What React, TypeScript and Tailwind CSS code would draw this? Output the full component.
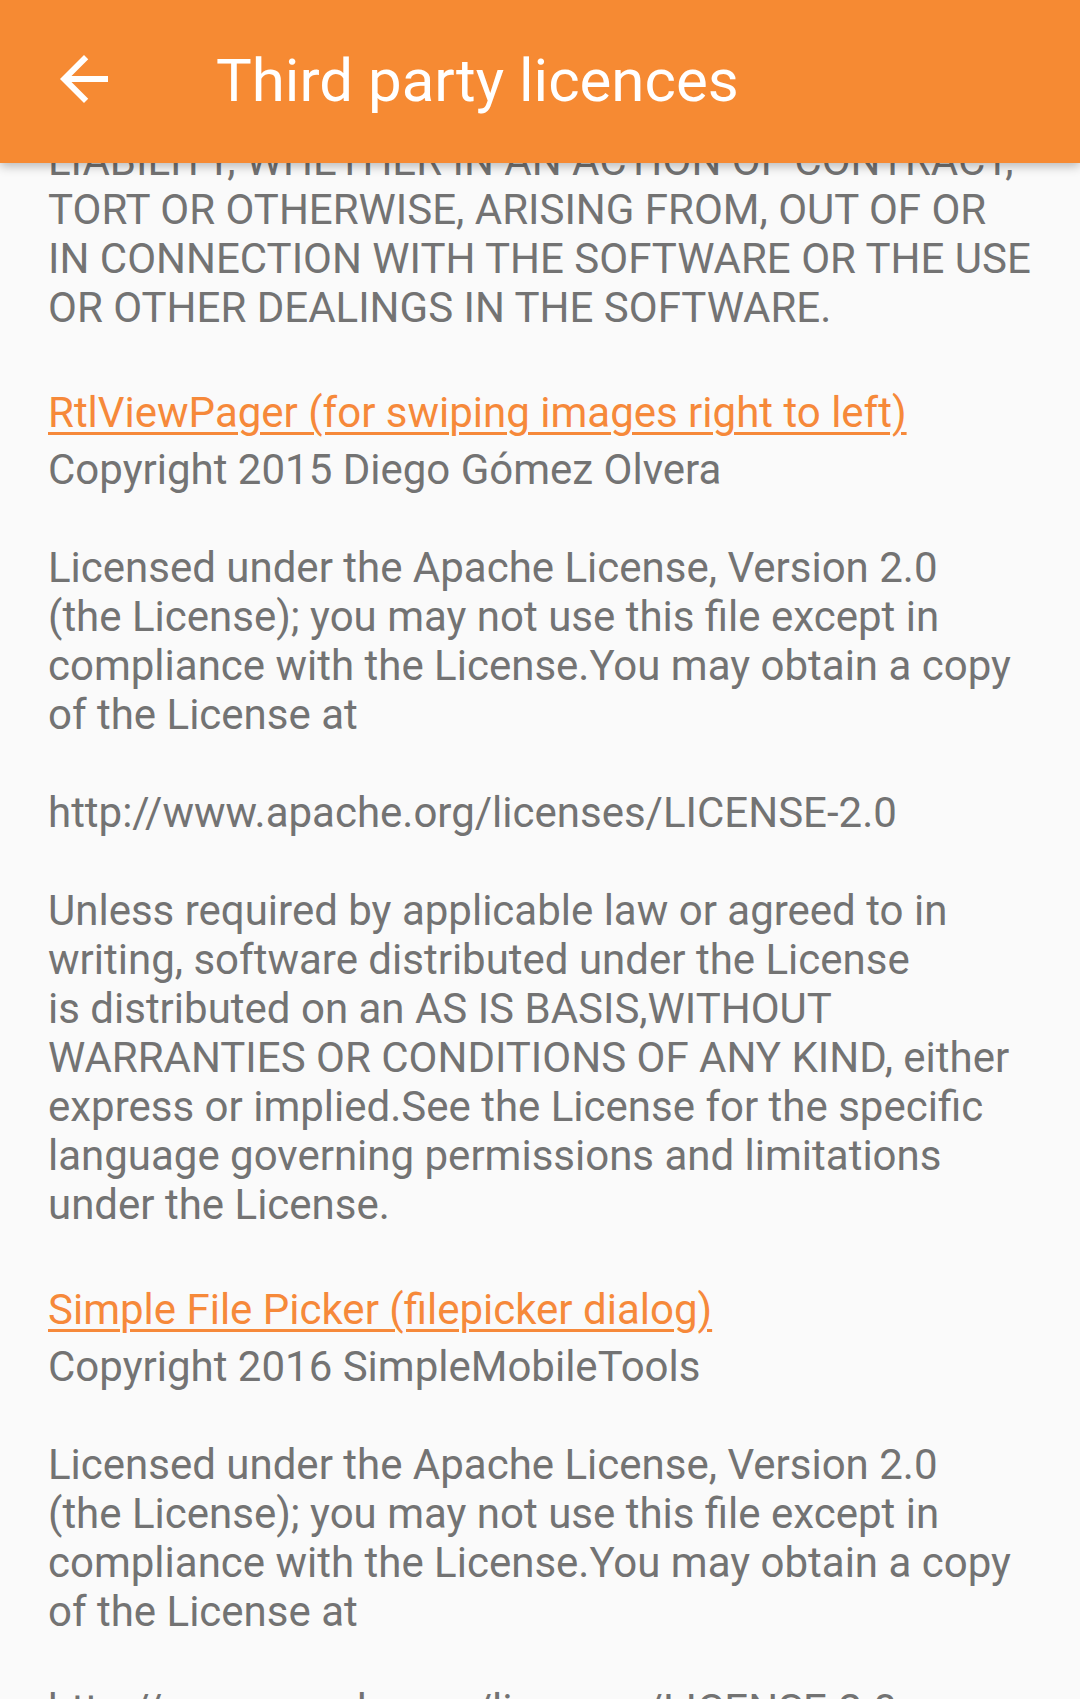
import React from "react";

const MIT_TAIL = [
  "LIABILITY, WHETHER IN AN ACTION OF CONTRACT,",
  "TORT OR OTHERWISE, ARISING FROM, OUT OF OR",
  "IN CONNECTION WITH THE SOFTWARE OR THE USE",
  "OR OTHER DEALINGS IN THE SOFTWARE.",
];

const apache = (copyright: string) => [
  copyright,
  "",
  "Licensed under the Apache License, Version 2.0",
  "(the License); you may not use this file except in",
  "compliance with the License.You may obtain a copy",
  "of the License at",
  "",
  "http://www.apache.org/licenses/LICENSE-2.0",
  "",
  "Unless required by applicable law or agreed to in",
  "writing, software distributed under the License",
  "is distributed on an AS IS BASIS,WITHOUT",
  "WARRANTIES OR CONDITIONS OF ANY KIND, either",
  "express or implied.See the License for the specific",
  "language governing permissions and limitations",
  "under the License.",
];

function TextBlock({ lines }: { lines: string[] }) {
  return (
    <div className="text-[42px] leading-[49px] text-[#737373] whitespace-nowrap">
      {lines.map((l, i) => (
        <div key={i} className="h-[49px]">
          {l}
        </div>
      ))}
    </div>
  );
}

function Item({ title, lines }: { title: string; lines: string[] }) {
  return (
    <div className="flex flex-col mt-[56px]">
      <a
        href="#"
        className="self-start text-[42px] leading-[49px] text-[#f6893a] underline decoration-[3px] underline-offset-[5px] whitespace-nowrap"
      >
        {title}
      </a>
      <div className="mt-[8px]">
        <TextBlock lines={lines} />
      </div>
    </div>
  );
}

export default function App() {
  return (
    <div
      className="relative w-[1080px] h-[1699px] overflow-hidden bg-[#fafafa]"
      style={{ fontFamily: "Roboto, 'Noto Sans', sans-serif" }}
    >
      <div className="flex flex-col pl-[48px] pr-[48px] pt-[136px]">
        <TextBlock lines={MIT_TAIL} />
        <Item
          title="RtlViewPager (for swiping images right to left)"
          lines={apache("Copyright 2015 Diego Gómez Olvera")}
        />
        <Item
          title="Simple File Picker (filepicker dialog)"
          lines={apache("Copyright 2016 SimpleMobileTools")}
        />
      </div>

      <div className="absolute top-0 left-0 right-0 h-[163px] bg-[#f68a33] flex items-start shadow-[0_3px_10px_rgba(0,0,0,0.28)]">
        <div className="ml-[48px] mt-[43px] w-[72px] h-[72px] flex items-center justify-center">
          <svg width="72" height="72" viewBox="0 0 24 24" fill="#ffffff">
            <path d="M20 11H7.83l5.59-5.59L12 4l-8 8 8 8 1.41-1.41L7.83 13H20v-2z" />
          </svg>
        </div>
        <div className="ml-[96px] mt-[46px] text-[60px] leading-[70px] text-white whitespace-nowrap">
          Third party licences
        </div>
      </div>
    </div>
  );
}
